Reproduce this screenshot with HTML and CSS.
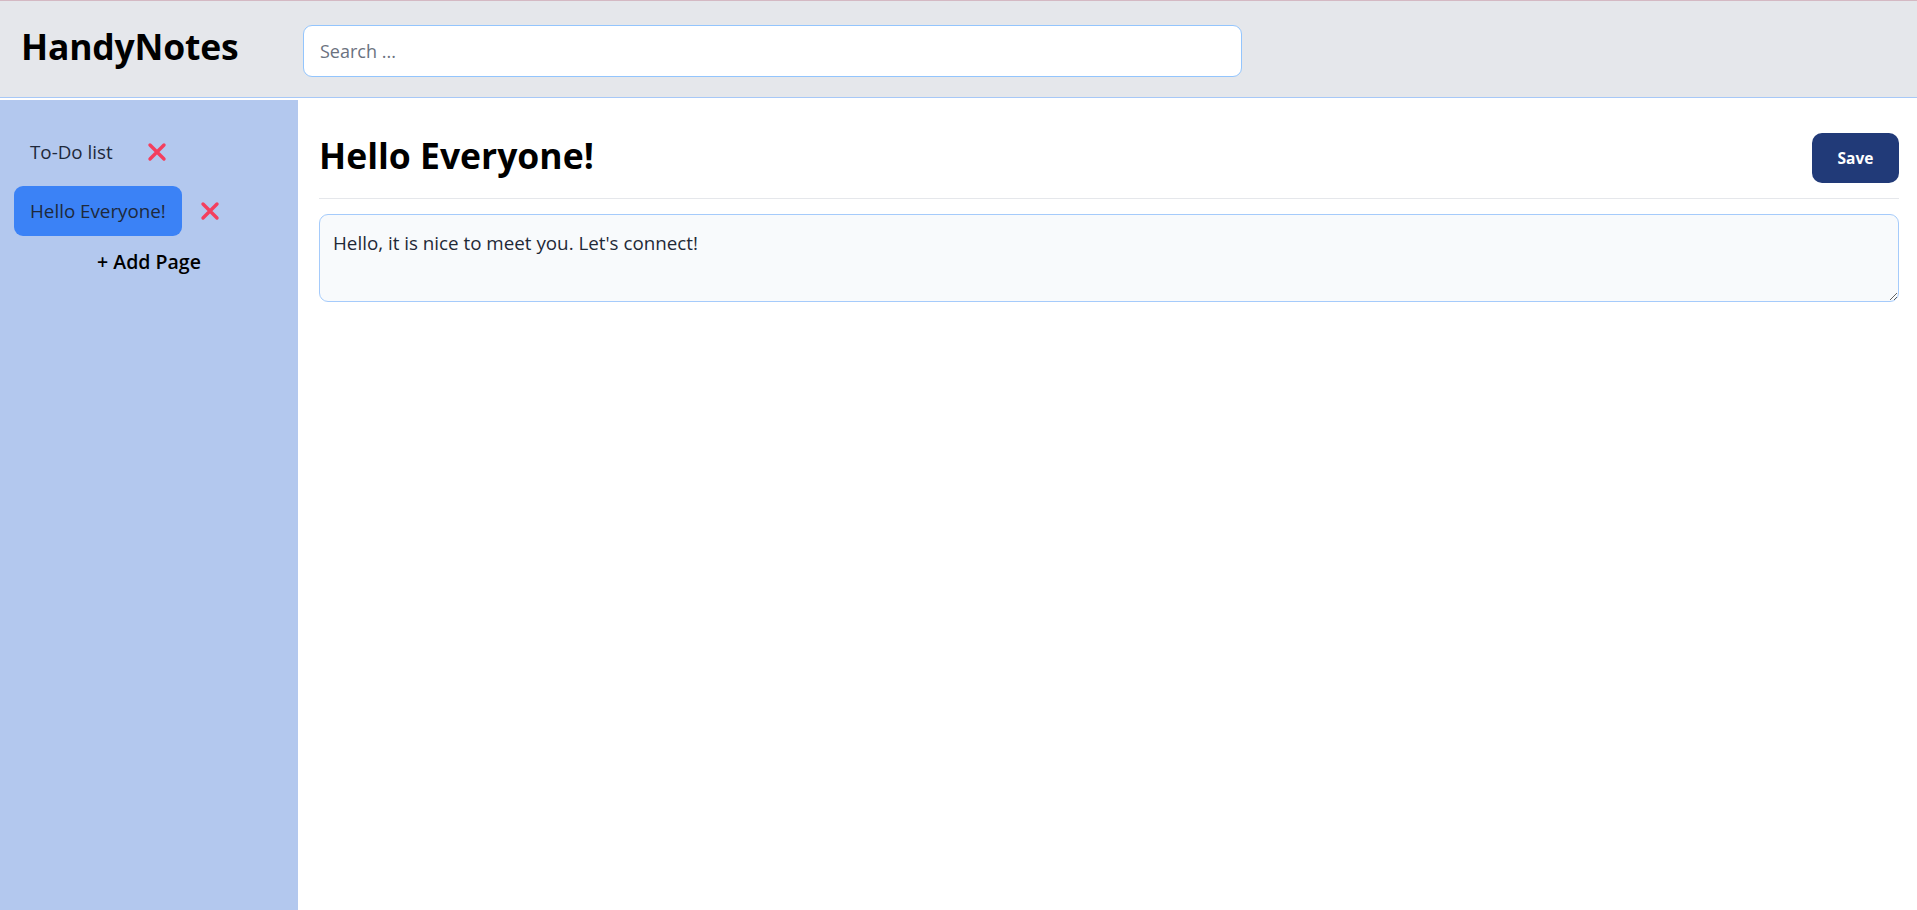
FILE: index.html
```html
<!DOCTYPE html>
<html lang="en">
<head>
<meta charset="utf-8">
<title>HandyNotes</title>
<link rel="stylesheet" href="styles.css">
</head>
<body>
<header class="topbar">
  <div class="brand">HandyNotes</div>
  <input class="search" type="text" placeholder="Search ...">
</header>
<div class="layout">
  <aside class="sidebar">
    <ul class="pages">
      <li class="page-row">
        <button class="page-btn">To-Do list</button>
        <button class="del-btn" aria-label="Delete">
          <svg viewBox="0 0 20 20" width="20" height="20"><path d="M3 3 L17 17 M17 3 L3 17" stroke="#f43f5e" stroke-width="3.4" stroke-linecap="round"/></svg>
        </button>
      </li>
      <li class="page-row">
        <button class="page-btn active">Hello Everyone!</button>
        <button class="del-btn" aria-label="Delete">
          <svg viewBox="0 0 20 20" width="20" height="20"><path d="M3 3 L17 17 M17 3 L3 17" stroke="#f43f5e" stroke-width="3.4" stroke-linecap="round"/></svg>
        </button>
      </li>
    </ul>
    <button class="add-page">+ Add Page</button>
  </aside>
  <main class="editor">
    <div class="editor-head">
      <h1 class="title">Hello Everyone!</h1>
      <button class="save">Save</button>
    </div>
    <textarea class="note">Hello, it is nice to meet you. Let's connect!</textarea>
  </main>
</div>
</body>
</html>
```
FILE: styles.css
```css
* { box-sizing: border-box; }
html, body { margin: 0; padding: 0; height: 100%; }
body {
  font-family: "Open Sans", "Noto Sans", sans-serif;
  border-top: 1px solid #d4b9c3;
  display: flex;
  flex-direction: column;
  overflow: hidden;
  color: #111;
}
.topbar {
  display: flex;
  align-items: center;
  height: 97px;
  flex: none;
  background: #e5e7eb;
  border-bottom: 1px solid #a7c8f7;
  padding-left: 21px;
  padding-top: 4px;
  margin-bottom: 2px;
}
.brand {
  width: 282px;
  font-size: 35.5px;
  font-weight: 700;
  color: #000;
  margin-top: -10px;
  letter-spacing: -0.2px;
}
.search {
  width: 939px;
  height: 52px;
  border: 1px solid #93c5fd;
  border-radius: 9px;
  background: #fff;
  padding: 0 16px;
  font-family: inherit;
  font-size: 18px;
  color: #111;
  outline: none;
}
.search::placeholder { color: #6b7280; }
.layout {
  flex: 1;
  display: flex;
  min-height: 0;
}
.sidebar {
  width: 298px;
  flex: none;
  background: #b3c8ee;
  padding: 27px 0 0 14px;
  display: flex;
  flex-direction: column;
}
.pages {
  list-style: none;
  margin: 0;
  padding: 0;
  display: flex;
  flex-direction: column;
  gap: 9px;
}
.page-row {
  display: flex;
  align-items: center;
}
.page-btn {
  border: none;
  background: transparent;
  font-family: inherit;
  font-size: 18.8px;
  line-height: 26px;
  padding: 12px 16px;
  border-radius: 9px;
  color: #1e293b;
  cursor: pointer;
}
.page-btn.active { background: #3b82f6; }
.del-btn {
  border: none;
  background: transparent;
  padding: 0;
  margin-left: 18px;
  width: 20px;
  height: 20px;
  display: flex;
  cursor: pointer;
}
.add-page {
  align-self: center;
  margin: 14px 14px 0 0;
  border: none;
  background: transparent;
  font-family: inherit;
  font-size: 19.5px;
  font-weight: 600;
  line-height: 24px;
  padding: 0;
  color: #000;
  cursor: pointer;
}
.editor {
  flex: 1;
  padding: 33px 18px 0 21px;
  display: flex;
  flex-direction: column;
  background: #fff;
}
.editor-head {
  display: flex;
  justify-content: space-between;
  align-items: center;
  padding-bottom: 15px;
  border-bottom: 1px solid #e5e7eb;
}
.title {
  margin: 0 0 6px 0;
  font-size: 35.5px;
  line-height: 40px;
  font-weight: 700;
  color: #000;
}
.save {
  width: 87px;
  height: 50px;
  border: none;
  border-radius: 10px;
  background: #213a78;
  color: #fff;
  font-family: inherit;
  font-size: 15.5px;
  font-weight: 700;
  cursor: pointer;
}
.note {
  margin-top: 15px;
  width: 100%;
  height: 88px;
  border: 1px solid #a5cbfb;
  border-radius: 9px;
  background: #f8fafc;
  padding: 14px 13px;
  font-family: inherit;
  font-size: 18.8px;
  line-height: 28px;
  color: #1f2937;
  outline: none;
}
```
